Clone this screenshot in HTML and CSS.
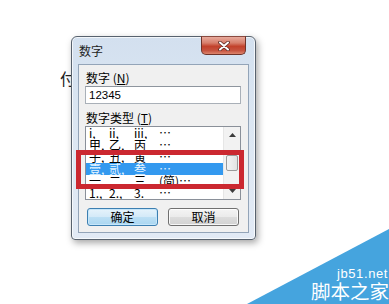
FILE: index.html
```html
<!DOCTYPE html>
<html lang="zh">
<head>
<meta charset="utf-8">
<title>数字</title>
<link rel="stylesheet" href="styles.css">
</head>
<body>
<div class="desk">
  <span class="bgchar">付</span>

  <div class="win">
    <div class="titlebar">
      <span class="title">数字</span>
      <div class="close">
        <svg width="12" height="10" viewBox="0 0 12 10">
          <path d="M2 1.5 L10 8.5 M10 1.5 L2 8.5" stroke="#5a2a24" stroke-width="3.6" stroke-linecap="round"/>
          <path d="M2 1.5 L10 8.5 M10 1.5 L2 8.5" stroke="#ffffff" stroke-width="2" stroke-linecap="round"/>
        </svg>
      </div>
    </div>
    <div class="client">
      <div class="lbl">数字 (<u>N</u>)</div>
      <div class="input">12345</div>
      <div class="lbl lbl2">数字类型 (<u>T</u>)</div>
      <div class="listbox">
        <div class="rows">
          <div class="row"><span>i,</span><span>ii,</span><span>iii,</span><span>…</span></div>
          <div class="row"><span>甲,</span><span>乙,</span><span>丙</span><span>…</span></div>
          <div class="row"><span>子,</span><span>丑,</span><span>寅</span><span>…</span></div>
          <div class="row sel"><span>壹,</span><span>贰,</span><span>叁</span><span>…</span></div>
          <div class="row"><span>一,</span><span>二,</span><span>三</span><span>(简)…</span></div>
          <div class="row"><span>1.,</span><span>2.,</span><span>3.</span><span>…</span></div>
        </div>
        <div class="sbar">
          <div class="arr">
            <svg width="7" height="4" viewBox="0 0 7 4"><path d="M0 4 L3.5 0 L7 4 Z" fill="#3c3c3c"/></svg>
          </div>
          <div class="track"><div class="thumb"></div></div>
          <div class="arr">
            <svg width="7" height="4" viewBox="0 0 7 4"><path d="M0 0 L3.5 4 L7 0 Z" fill="#3c3c3c"/></svg>
          </div>
        </div>
      </div>
      <div class="btns">
        <div class="btn def">确定</div>
        <div class="btn">取消</div>
      </div>
    </div>
  </div>

  <div class="mark"></div>

  <svg class="wmbg" width="389" height="304" viewBox="0 0 389 304">
    <polygon points="389,229 389,304 247,304" fill="#45a4de"/>
  </svg>
  <div class="wm">
    <span class="wm-url">jb51.net</span>
    <span class="wm-name">脚本之家</span>
  </div>
</div>
</body>
</html>
```

FILE: styles.css
```css
* { box-sizing: border-box; }

html, body {
  margin: 0;
  padding: 0;
  background: #ffffff;
}

.desk {
  position: relative;
  width: 389px;
  height: 304px;
  overflow: hidden;
  background: #ffffff;
  font-family: "Noto Sans CJK SC", "DejaVu Sans", sans-serif;
  font-size: 12px;
  color: #000;
}

.bgchar {
  position: absolute;
  left: 60px;
  top: 70px;
  font-family: "Noto Sans CJK SC", serif;
  font-size: 16px;
  line-height: 17px;
  color: #222;
}

/* window */
.win {
  position: absolute;
  left: 71px;
  top: 36px;
  width: 185px;
  height: 204px;
  border: 1px solid #58626e;
  border-radius: 6px 6px 4px 4px;
  background: linear-gradient(to bottom, #d3e0ef 0%, #dbe6f2 40%, #e2eaf5 100%);
  box-shadow: 2px 3px 7px rgba(0, 0, 0, 0.35), inset 0 0 0 1px rgba(255, 255, 255, 0.7);
  padding: 0 6px 6px 6px;
  display: flex;
  flex-direction: column;
}

.titlebar {
  height: 27px;
  display: flex;
  justify-content: space-between;
  align-items: flex-start;
}

.title {
  align-self: center;
  margin-left: 1px;
  margin-top: 1px;
  font-size: 12px;
  line-height: 14px;
  color: #1e1e1e;
}

.close {
  margin-top: -1px;
  margin-right: 3px;
  width: 45px;
  height: 19px;
  border: 1px solid #6e3329;
  border-top-color: #8a4a40;
  border-radius: 0 0 5px 5px;
  background: linear-gradient(to bottom, #e8aa9c 0%, #d77f6c 35%, #c2412b 55%, #c65440 80%, #dc856d 100%);
  display: flex;
  align-items: center;
  justify-content: center;
}

.client {
  flex: 1;
  border: 1px solid #93a4b8;
  background: #f0f0f0;
  padding: 6px 7px 0 6px;
}

.lbl {
  height: 14px;
  line-height: 14px;
  font-size: 12px;
  padding-left: 1px;
  white-space: nowrap;
}

.lbl u { text-decoration: underline; }

.input {
  margin-top: 1px;
  height: 18px;
  border: 1px solid #a9b0b8;
  border-top-color: #8e959e;
  background: #ffffff;
  padding-left: 3px;
  font-family: "Liberation Sans", sans-serif;
  font-size: 11.5px;
  line-height: 16px;
}

.lbl2 { margin-top: 7px; }

.listbox {
  margin-top: 1px;
  height: 74px;
  border: 1px solid #8a9099;
  background: #ffffff;
  display: flex;
}

.rows {
  flex: 1;
  display: flex;
  flex-direction: column;
}

.row {
  height: 12px;
  line-height: 12px;
  font-size: 12px;
  padding-left: 3px;
  display: grid;
  grid-template-columns: 20px 25px 25px auto;
  white-space: nowrap;
  overflow: hidden;
}

.row.sel {
  background: #3399ef;
  color: #e8f6ff;
}

.sbar {
  width: 17px;
  background: #f2f2f2;
  border-left: 1px solid #e6e6e6;
  display: flex;
  flex-direction: column;
}

.arr {
  height: 16px;
  display: flex;
  align-items: center;
  justify-content: center;
}

.track {
  flex: 1;
  padding: 12px 2px 0 2px;
}

.thumb {
  height: 16px;
  border: 1px solid #9a9a9a;
  border-radius: 2px;
  background: linear-gradient(to right, #f4f4f4, #e2e2e2);
}

.btns {
  margin-top: 8px;
  padding-left: 2px;
  display: flex;
  gap: 10px;
}

.btn {
  width: 71px;
  height: 18px;
  border: 1px solid #707070;
  border-radius: 3px;
  background: linear-gradient(to bottom, #f4f4f4 0%, #ebebeb 48%, #dcdcdc 52%, #d2d2d2 100%);
  display: flex;
  align-items: center;
  justify-content: center;
  font-size: 12px;
  line-height: 14px;
  box-shadow: inset 0 0 0 1px rgba(255, 255, 255, 0.8);
}

.btn.def {
  border-color: #3c7fb1;
  background: linear-gradient(to bottom, #e6f3fb 0%, #d4eaf8 48%, #bcdff4 52%, #a9d6f1 100%);
  box-shadow: inset 0 0 0 1px #c6e6fa;
}

/* annotation */
.mark {
  position: absolute;
  left: 76px;
  top: 150px;
  width: 168px;
  height: 39px;
  border: 5px solid #cb2830;
}

/* watermark */
.wmbg {
  position: absolute;
  left: 0;
  top: 0;
}

.wm {
  position: absolute;
  right: 0;
  bottom: 2px;
  width: 80px;
  display: flex;
  flex-direction: column;
  align-items: flex-end;
  color: #ffffff;
}

.wm-url {
  font-family: "Liberation Sans", sans-serif;
  font-size: 13px;
  line-height: 13px;
  letter-spacing: 0.6px;
  margin-right: 1px;
}

.wm-name {
  font-family: "Noto Sans CJK SC", sans-serif;
  font-size: 19.5px;
  line-height: 22px;
  letter-spacing: 0;
}
```
